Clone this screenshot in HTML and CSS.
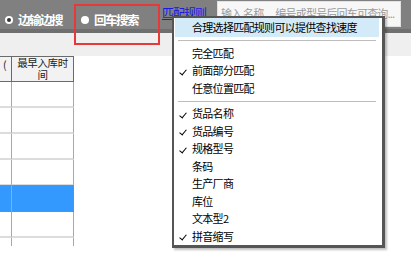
FILE: index.html
```html
<!DOCTYPE html>
<html lang="zh">
<head>
<meta charset="utf-8">
<link rel="stylesheet" href="styles.css">
</head>
<body>
<div class="app">
  <div class="toolbar">
    <div class="radio on"><span class="dot"></span></div>
    <div class="rlabel">边输边搜</div>
    <div class="radio off"></div>
    <div class="rlabel">回车搜索</div>
    <a class="link">匹配规则</a>
    <div class="search">输入 名称 、编号或型号后回车可查询...</div>
  </div>
  <div class="band"></div>
  <div class="grid">
    <div class="hcell c1">(</div>
    <div class="hcell c2"><span class="hl">最早入库时</span><span class="hl">间</span></div>
    <div class="cell c1"></div><div class="cell c2"></div>
    <div class="cell c1"></div><div class="cell c2"></div>
    <div class="cell c1"></div><div class="cell c2"></div>
    <div class="cell c1"></div><div class="cell c2"></div>
    <div class="cell c1 sel"></div><div class="cell c2 sel"></div>
    <div class="cell c1"></div><div class="cell c2"></div>
    <div class="cell c1 last"></div><div class="cell c2 last"></div>
  </div>
  <div class="annot"></div>
  <div class="menu">
    <div class="item hi">合理选择匹配规则可以提供查找速度</div>
    <div class="sep"></div>
    <div class="item">完全匹配</div>
    <div class="item chk">前面部分匹配</div>
    <div class="item">任意位置匹配</div>
    <div class="sep"></div>
    <div class="item chk">货品名称</div>
    <div class="item chk">货品编号</div>
    <div class="item chk">规格型号</div>
    <div class="item">条码</div>
    <div class="item">生产厂商</div>
    <div class="item">库位</div>
    <div class="item">文本型2</div>
    <div class="item chk">拼音缩写</div>
  </div>
</div>
</body>
</html>
```
FILE: styles.css
```css
* { box-sizing: border-box; }
html, body { margin: 0; padding: 0; background: #fff; }
body { width: 411px; height: 266px; overflow: hidden; font-family: "Noto Sans CJK SC", "Noto Sans", sans-serif; }
.app { position: relative; width: 411px; height: 266px; }

.toolbar {
  height: 33px;
  background: #808080;
  display: flex;
  align-items: flex-start;
  padding-left: 5px;
  border-bottom: 4px solid #6f6f6f;
}
.radio {
  width: 8px; height: 8px; border-radius: 50%;
  background: #fff; margin-top: 16px;
  display: flex; align-items: center; justify-content: center;
  flex: none;
}
.radio .dot { width: 4px; height: 4px; border-radius: 50%; background: #333; }
.radio.off { margin-left: 19px; }
.rlabel {
  color: #fff; font-weight: bold; font-size: 12.5px; letter-spacing: -1.5px;
  line-height: 14px; margin-top: 13px; margin-left: 5px; width: 44px; white-space: nowrap;
}
.link {
  color: #1a1ae6; text-decoration: underline; font-size: 12px; letter-spacing: -1px;
  line-height: 14px; margin-top: 6px; margin-left: 24px; width: 46px; white-space: nowrap;
}
.search {
  margin-left: 9px; margin-top: 1px; width: 184px; height: 26px;
  background: #f7f7f7; border: 1px solid #e2e2e2;
  color: #9a9a9a; font-size: 11px; letter-spacing: -0.8px; line-height: 22px;
  padding-left: 3px; white-space: nowrap; overflow: hidden;
}
.band { height: 23px; background: #efefef; }

.grid {
  display: grid;
  grid-template-columns: 12px 62px;
  grid-template-rows: 26px repeat(6, 26px) 8px;
  width: 74px;
}
.hcell {
  background: #f2f2f2;
  border-top: 1px solid #6a6a6a;
  border-bottom: 1px solid #6a6a6a;
  border-right: 1px solid #6a6a6a;
  font-size: 10.5px; line-height: 12px; color: #222; letter-spacing: -0.4px;
}
.hcell.c1 { padding: 2px 0 0 3px; }
.hcell.c2 { display: flex; flex-direction: column; align-items: center; padding-top: 0; }
.hl { display: block; height: 11.5px; line-height: 12px; overflow: visible; }
.cell {
  border-right: 1px solid #a8a8a8;
  border-bottom: 2px solid #dcdcdc;
}
.cell.sel {
  background: #3399ff;
  border-top: 1px dotted #d07a2a;
  border-bottom: 1px dotted #d07a2a;
  margin-top: -1px;
}
.cell.c1.sel { border-right: 1px solid #a8a8a8; }
.cell.c2.sel { border-right: 1px dotted #d07a2a; }
.cell.last { border-bottom: none; }

.annot {
  position: absolute; left: 74px; top: 4px; width: 86px; height: 41px;
  border: 2px solid #e8393a;
}

.menu {
  position: absolute; left: 172px; top: 16px; width: 213px;
  background: #fff;
  border: 2px solid #555;
  border-right-width: 3px; border-bottom-width: 3px;
  box-shadow: 2px 2px 2px rgba(0,0,0,0.25);
  padding: 0 3px 0 1px;
}
.item {
  height: 17.5px; line-height: 17.5px; font-size: 11px; letter-spacing: -0.7px;
  color: #000; padding-left: 17px; white-space: nowrap; position: relative;
}
.item.hi { height: 18.5px; line-height: 18.5px; background: #d3eaf8; }
.sep { height: 8px; padding-top: 3.5px; }
.sep::before { content: ""; display: block; height: 1px; background: #bdbdbd; margin: 0 3px 0 3px; }
.item.chk::before {
  content: ""; position: absolute; left: 6px; top: 5.5px;
  width: 3px; height: 6px;
  border-right: 1.6px solid #000; border-bottom: 1.6px solid #000;
  transform: rotate(40deg);
}
```
